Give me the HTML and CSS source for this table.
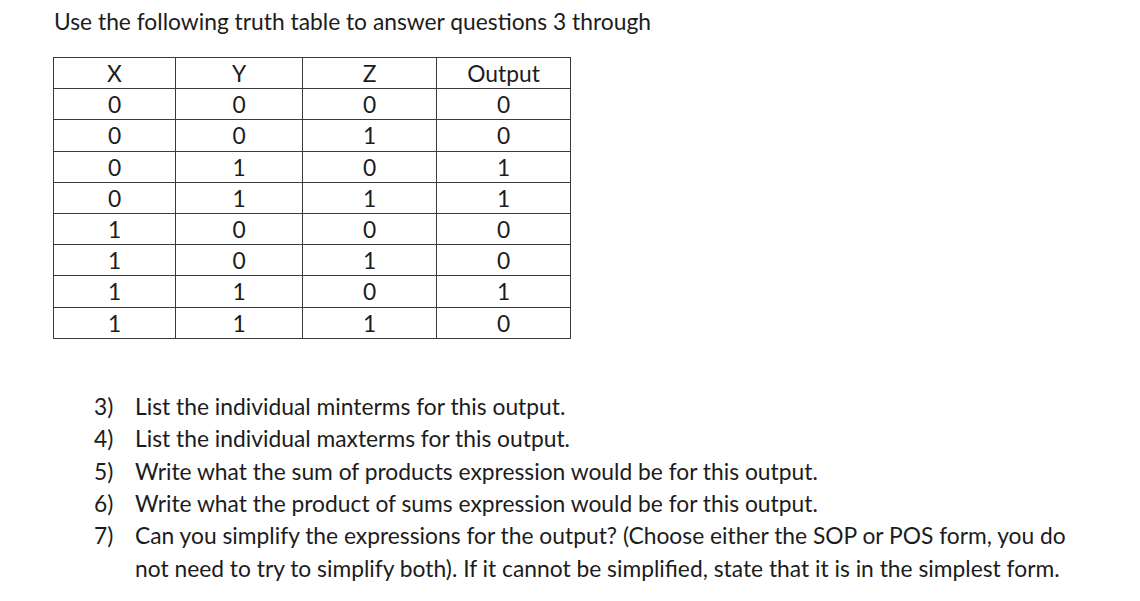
FILE: index.html
```html
<!DOCTYPE html>
<html>
<head>
<meta charset="utf-8">
<link rel="stylesheet" href="styles.css">
</head>
<body>
<div class="page">
  <p class="intro">Use the following truth table to answer questions 3 through</p>
  <table class="truth">
    <tr><td>X</td><td>Y</td><td>Z</td><td>Output</td></tr>
    <tr><td>0</td><td>0</td><td>0</td><td>0</td></tr>
    <tr><td>0</td><td>0</td><td>1</td><td>0</td></tr>
    <tr><td>0</td><td>1</td><td>0</td><td>1</td></tr>
    <tr><td>0</td><td>1</td><td>1</td><td>1</td></tr>
    <tr><td>1</td><td>0</td><td>0</td><td>0</td></tr>
    <tr><td>1</td><td>0</td><td>1</td><td>0</td></tr>
    <tr><td>1</td><td>1</td><td>0</td><td>1</td></tr>
    <tr><td>1</td><td>1</td><td>1</td><td>0</td></tr>
  </table>
  <div class="questions">
    <div class="q"><span class="num">3)</span><span class="txt">List the individual minterms for this output.</span></div>
    <div class="q"><span class="num">4)</span><span class="txt">List the individual maxterms for this output.</span></div>
    <div class="q"><span class="num">5)</span><span class="txt">Write what the sum of products expression would be for this output.</span></div>
    <div class="q"><span class="num">6)</span><span class="txt">Write what the product of sums expression would be for this output.</span></div>
    <div class="q"><span class="num">7)</span><span class="txt">Can you simplify the expressions for the output? (Choose either the SOP or POS form, you do not need to try to simplify both). If it cannot be simplified, state that it is in the simplest form.</span></div>
  </div>
</div>
</body>
</html>
```

FILE: styles.css
```css
html, body {
  margin: 0;
  padding: 0;
  background: #ffffff;
}
body {
  font-family: "Lato", "Open Sans", sans-serif;
  color: #1c1c1c;
}
.page {
  padding: 7px 0 0 54px;
}
.intro {
  margin: 0;
  font-size: 22.8px;
  line-height: 28px;
}
.truth {
  margin: 22px 0 0 -1px;
  border-collapse: collapse;
  font-size: 22.8px;
}
.truth td {
  border: 1.5px solid #3a3a3a;
  height: 30.2px;
  padding: 0;
  text-align: center;
  line-height: 28px;
}
.truth td:nth-child(1) { width: 121px; }
.truth td:nth-child(2) { width: 126px; }
.truth td:nth-child(3) { width: 133px; }
.truth td:nth-child(4) { width: 133px; }
.questions {
  margin: 51px 0 0 40px;
  width: 1000px;
  font-size: 22.8px;
}
.q {
  display: grid;
  grid-template-columns: 41px 945px;
  line-height: 32.4px;
}
```
